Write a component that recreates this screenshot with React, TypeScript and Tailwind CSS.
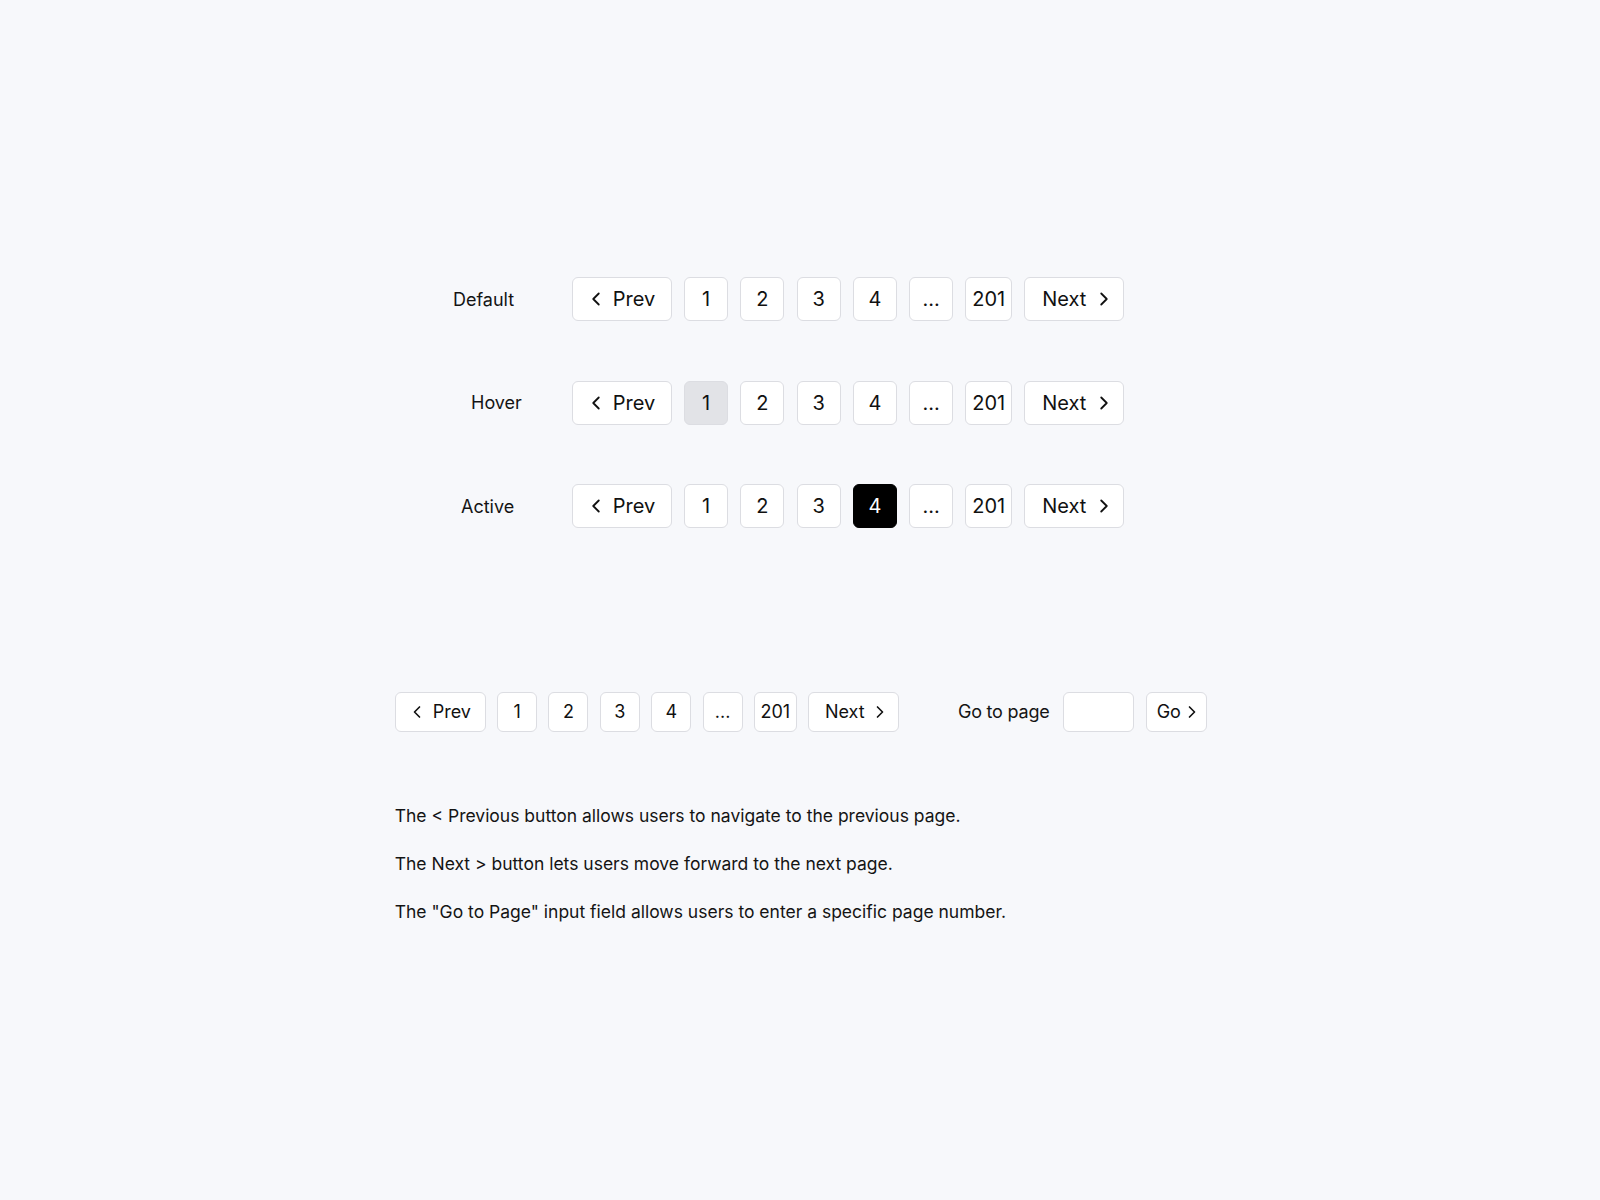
import React from "react";
import { ChevronLeft, ChevronRight } from "lucide-react";

type State = "default" | "hover" | "active";

const pages = ["1", "2", "3", "4", "...", "201"];

const base =
  "flex items-center border border-[#dcdde2] bg-white rounded-[6px] text-[#111111]";

// Large pagination row used to show the button states
const PagerRow = ({ label, state, labelClass }: { label: string; state: State; labelClass: string }) => {
  return (
    <div className="flex items-center h-[44px]">
      <div className="w-[118.7px]">
        <span className={`text-[18px] text-[#141414] ${labelClass}`}>{label}</span>
      </div>
      <div className="flex items-center gap-[12.3px] text-[20px]">
        <button className={`${base} h-[44px] w-[100px] pl-[12px] gap-[6px]`}>
          <ChevronLeft size={22} strokeWidth={2} />
          <span>Prev</span>
        </button>
        {pages.map((p) => {
          let cls = `${base} justify-center h-[44px] ${p === "201" ? "w-[46.5px]" : "w-[44px]"}`;
          if (state === "hover" && p === "1") cls += " !bg-[#e2e3e7]";
          if (state === "active" && p === "4") cls += " !bg-black !border-black !text-white";
          return (
            <button key={p} className={cls}>
              {p}
            </button>
          );
        })}
        <button className={`${base} h-[44px] w-[100px] pl-[17px] gap-[7px]`}>
          <span>Next</span>
          <ChevronRight size={22} strokeWidth={2} />
        </button>
      </div>
    </div>
  );
};

export default function App() {
  return (
    <div
      className="min-h-[1200px] w-full bg-[#f7f8fb] text-[#111111]"
      style={{ fontFamily: "Inter, 'Liberation Sans', sans-serif" }}
    >
      {/* State examples */}
      <div className="pt-[277px] pl-[453px] flex flex-col gap-[59.7px]">
        <PagerRow label="Default" state="default" labelClass="" />
        <PagerRow label="Hover" state="hover" labelClass="ml-[18px]" />
        <PagerRow label="Active" state="active" labelClass="ml-[8px]" />
      </div>

      {/* Compact pagination with go-to-page */}
      <div className="mt-[163.6px] pl-[394.7px] flex items-center text-[18px] h-[40px]">
        <div className="flex items-center gap-[11.4px]">
          <button className={`${base} h-[40px] w-[91px] pl-[11px] gap-[6px]`}>
            <ChevronLeft size={20} strokeWidth={2} />
            <span>Prev</span>
          </button>
          {pages.map((p) => (
            <button
              key={p}
              className={`${base} justify-center h-[40px] ${p === "201" ? "w-[42.5px]" : "w-[40px]"}`}
            >
              {p}
            </button>
          ))}
          <button className={`${base} h-[40px] w-[91px] pl-[16px] gap-[5px]`}>
            <span>Next</span>
            <ChevronRight size={20} strokeWidth={2} />
          </button>
        </div>
        <span className="ml-[59px] text-[#141414] tracking-[-0.2px]">Go to page</span>
        <input
          type="text"
          className="ml-[13px] h-[40px] w-[71px] rounded-[6px] border border-[#dcdde2] bg-white outline-none"
        />
        <button className={`${base} ml-[12px] h-[40px] w-[61px] pl-[10px] gap-[1px]`}>
          <span>Go</span>
          <ChevronRight size={20} strokeWidth={2} />
        </button>
      </div>

      {/* Notes */}
      <div className="pl-[394.7px] mt-[70px] flex flex-col gap-[20px] text-[17.5px] leading-[28px] text-[#141414]">
        <p>The &lt; Previous button allows users to navigate to the previous page.</p>
        <p>The Next &gt; button lets users move forward to the next page.</p>
        <p>The "Go to Page" input field allows users to enter a specific page number.</p>
      </div>
    </div>
  );
}
